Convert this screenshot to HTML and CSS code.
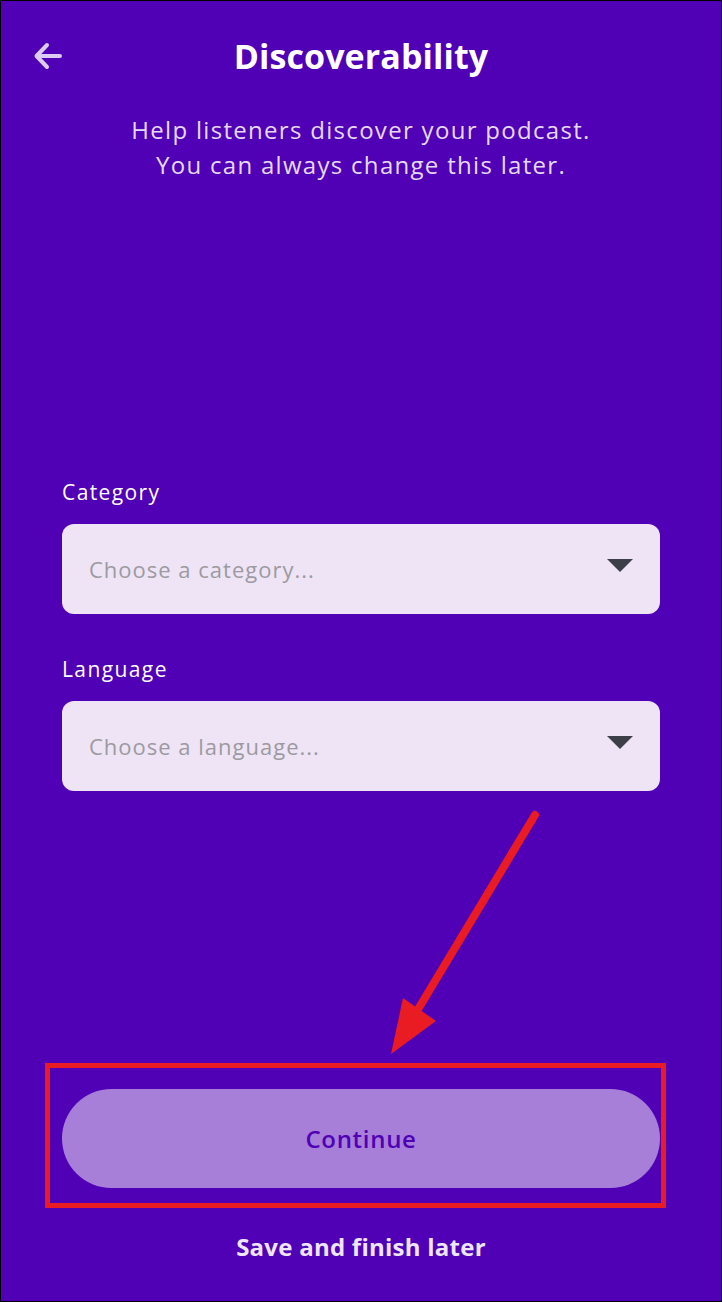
FILE: index.html
```html
<!DOCTYPE html>
<html lang="en">
<head>
  <meta charset="UTF-8">
  <meta name="viewport" content="width=device-width, initial-scale=1.0">
  <title>Discoverability</title>
  <link rel="stylesheet" href="styles.css">
</head>
<body>
  <div class="screen">
    <!-- Cabeçalho -->
    <header class="top-bar">
      <button class="back-btn" aria-label="Back">
        <svg width="30" height="30" viewBox="0 0 30 30">
          <path d="M27 15 H4 M14 4 L3.5 15 L14 26" fill="none" stroke="#dccbf3" stroke-width="4" stroke-linecap="round" stroke-linejoin="round"/>
        </svg>
      </button>
      <h1>Discoverability</h1>
      <span></span>
    </header>

    <p class="intro">Help listeners discover your podcast.<br>You can always change this later.</p>

    <!-- Campos -->
    <div class="form">
      <label class="field-label">Category</label>
      <div class="select">
        <span>Choose a category...</span>
        <i class="caret"></i>
      </div>

      <label class="field-label second">Language</label>
      <div class="select">
        <span>Choose a language...</span>
        <i class="caret"></i>
      </div>
    </div>

    <!-- Rodapé -->
    <div class="footer">
      <button class="continue">Continue</button>
      <a class="later" href="#">Save and finish later</a>
    </div>

    <!-- Anotação vermelha sobre a captura -->
    <svg class="markup" width="722" height="1302" viewBox="0 0 722 1302">
      <line x1="535" y1="815" x2="414" y2="1016" stroke="#e91b23" stroke-width="8" stroke-linecap="round"/>
      <polygon points="391,1054 403,998 436,1021" fill="#e91b23"/>
      <rect x="47.5" y="1065.5" width="616" height="140" fill="none" stroke="#e91b23" stroke-width="5"/>
    </svg>
  </div>
</body>
</html>
```

FILE: styles.css
```css
/* Layout geral */
body {
  margin: 0;
  font-family: "Open Sans", "Noto Sans", sans-serif;
}

.screen {
  position: relative;
  width: 722px;
  height: 1302px;
  box-sizing: border-box;
  border: 1px solid #000;
  background-color: #5000b5;
  display: flex;
  flex-direction: column;
  color: #fff;
}

/* Cabeçalho */
.top-bar {
  display: grid;
  grid-template-columns: 1fr auto 1fr;
  align-items: center;
  padding-top: 35px;
}

.back-btn {
  justify-self: start;
  margin-left: 32px;
  padding: 0;
  border: 0;
  background: none;
  display: flex;
}

h1 {
  margin: 0;
  font-size: 34px;
  line-height: 40px;
  font-weight: 700;
  letter-spacing: 0.1px;
}

.intro {
  margin: 36px 0 0;
  text-align: center;
  font-size: 24px;
  line-height: 35px;
  color: #e6daf6;
  letter-spacing: 1.3px;
}

/* Campos */
.form {
  display: flex;
  flex-direction: column;
  padding: 0 61px;
  margin-top: 297px;
}

.field-label {
  font-size: 21px;
  line-height: 26px;
  margin-bottom: 19px;
  letter-spacing: 1.4px;
}

.field-label.second {
  margin-top: 42px;
}

.select {
  height: 90px;
  border-radius: 12px;
  background-color: #eee4f6;
  display: flex;
  align-items: center;
  justify-content: space-between;
  padding: 0 27px;
  font-size: 22px;
  color: #9c9aa0;
  letter-spacing: 1px;
}

.caret {
  width: 0;
  height: 0;
  border-left: 13px solid transparent;
  border-right: 13px solid transparent;
  border-top: 13px solid #3d3f48;
  margin-top: -8px;
}

/* Rodapé */
.footer {
  margin-top: auto;
  padding: 0 61px 39px;
  display: flex;
  flex-direction: column;
  align-items: center;
}

.continue {
  width: 100%;
  height: 99px;
  border: 0;
  border-radius: 50px;
  background-color: #a77fd9;
  color: #5000b5;
  font-family: inherit;
  font-size: 24px;
  font-weight: 600;
  letter-spacing: 0.7px;
}

.later {
  margin-top: 44px;
  font-size: 24px;
  line-height: 30px;
  font-weight: 700;
  color: #efe5fa;
  text-decoration: none;
  letter-spacing: 0.25px;
}

/* Anotação */
.markup {
  position: absolute;
  left: -1px;
  top: -1px;
  pointer-events: none;
}
```
